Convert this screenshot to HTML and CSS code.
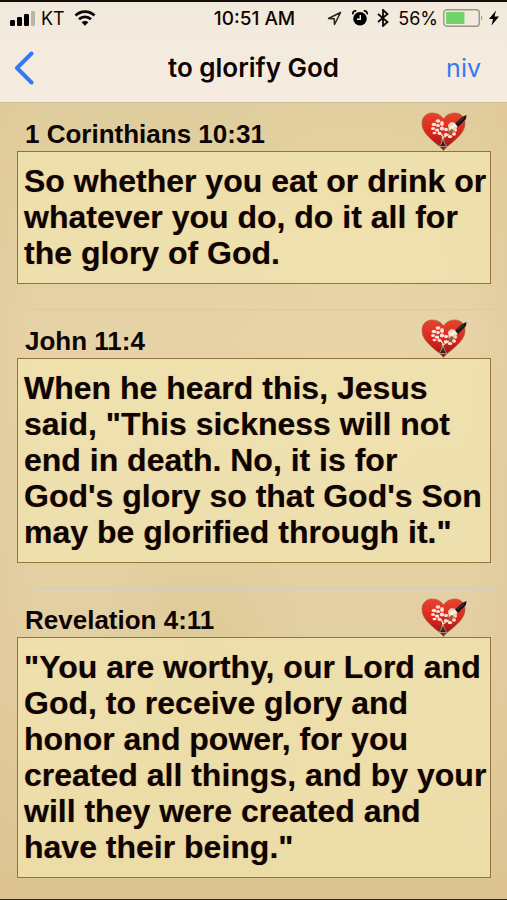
FILE: index.html
```html
<!DOCTYPE html>
<html lang="en">
<head>
<meta charset="utf-8">
<meta name="viewport" content="width=device-width, initial-scale=1">
<title>to glorify God</title>
<link rel="stylesheet" href="styles.css">
</head>
<body>
<svg class="defs" aria-hidden="true">
  <defs>
    <linearGradient id="red" x1="0" y1="0" x2="0" y2="1">
      <stop offset="0" stop-color="#ea4230"/>
      <stop offset=".55" stop-color="#d8241c"/>
      <stop offset="1" stop-color="#8e1712"/>
    </linearGradient>
    <symbol id="heart" viewBox="0 0 46 39">
      <path d="M22.500 38.500C18 32 1 24 1 11.500C1 5 5.500 1 11 1c5 0 9 2 11.500 6C25 3 29 1 34 1c5.500 0 10 4 10 10.500C44 24 27 32 22.500 38.500Z" fill="url(#red)" stroke="#a5603c" stroke-width=".7"/>
      <path d="M21.500 30l.2-6-5-5M22 26l6-4" fill="none" stroke="#e9dcc8" stroke-width="1.400"/>
      <path d="M22 26l-1.500 5-2.500 3.500h8L23.500 31Z" fill="#2c2522" stroke="#b9aa99" stroke-width=".8"/>
      <g fill="#fbe3d5">
        <ellipse cx="13" cy="12.500" rx="2.400" ry="1.700"/><ellipse cx="17" cy="9" rx="2.400" ry="1.700"/>
        <ellipse cx="21" cy="11.500" rx="1.900" ry="2.500"/><ellipse cx="17" cy="13.500" rx="2" ry="1.500"/>
        <ellipse cx="12" cy="16.500" rx="2" ry="1.600"/><ellipse cx="16" cy="18" rx="2.200" ry="1.600"/>
        <ellipse cx="21" cy="16.500" rx="2.200" ry="1.900"/><ellipse cx="13.500" cy="21" rx="2" ry="1.300"/>
        <ellipse cx="18.500" cy="21.500" rx="2" ry="1.400"/><ellipse cx="25" cy="22.500" rx="2.300" ry="1.600"/>
        <ellipse cx="29" cy="24.500" rx="2.300" ry="1.500"/><ellipse cx="33" cy="22" rx="2" ry="1.800"/>
        <ellipse cx="25" cy="17.500" rx="2" ry="1.800"/><ellipse cx="34.500" cy="18" rx="1.500" ry="1.800"/>
      </g>
      <path d="M27 13l3-3 5 1 2 3-3 5-6 2Z" fill="#ead8bd"/>
      <path d="M26 22l4-5 3 1-3 4Z" fill="#8b6937"/>
      <path d="M29 16.500l6-4" stroke="#fff4df" stroke-width="2.500"/>
      <path d="M34 11.500L42 4.500l3.500-1.500-.5 4-8 8Z" fill="#17171a"/>
      <path d="M36 11.500l7-6" stroke="#5a5a5d" stroke-width=".7"/>
    </symbol>
  </defs>
</svg>

<header class="top">
  <div class="status">
    <div class="carrier">
      <svg width="26" height="16" viewBox="0 0 26 16" aria-hidden="true">
        <rect x="0" y="10" width="5" height="6" rx="1.200"/>
        <rect x="7" y="7" width="5" height="9" rx="1.200"/>
        <rect x="14" y="4" width="5" height="12" rx="1.200"/>
        <rect x="21" y="1" width="4" height="15" rx="1.200" fill="#b9b3a8"/>
      </svg>
      <span>KT</span>
      <svg class="wifi" width="22" height="16" viewBox="0 0 22 16" aria-hidden="true">
        <path d="M1.500 5.500a13.500 13.500 0 0 1 19 0M5 9.300a8.500 8.500 0 0 1 12 0" fill="none" stroke="#0b0a09" stroke-width="2.800"/>
        <path d="M11 15.800l-3.400-3.500a4.800 4.800 0 0 1 6.800 0Z"/>
      </svg>
    </div>
    <time class="clock">10:51 AM</time>
    <div class="indicators">
      <svg width="15" height="15" viewBox="0 0 15 15" aria-hidden="true">
        <path d="M13.500 1.500L1.500 7.500l5.700.3.300 5.700Z" fill="none" stroke="#24211e" stroke-width="1.500" stroke-linejoin="round"/>
      </svg>
      <svg class="alarm" width="16" height="16" viewBox="0 0 16 16" aria-hidden="true">
        <circle cx="8" cy="8.800" r="6.800"/>
        <path d="M.8 4.300A3 3 0 0 1 4.300.9M15.200 4.300A3 3 0 0 0 11.700.9" fill="none" stroke="#0b0a09" stroke-width="1.800"/>
        <path d="M8.300 5v4.300H5" fill="none" stroke="#f4ecdf" stroke-width="1.400"/>
      </svg>
      <svg class="bluetooth" width="12" height="18" viewBox="0 0 12 18" aria-hidden="true">
        <path d="M1 5l9.500 8L6 17V1l4.500 4L1 13" fill="none" stroke="#0b0a09" stroke-width="1.800"/>
      </svg>
      <span>56%</span>
      <svg class="battery" width="41" height="18" viewBox="0 0 41 18" aria-hidden="true">
        <rect x=".8" y=".8" width="35.500" height="16.400" rx="3" fill="none" stroke="#9d958b" stroke-width="1.400"/>
        <rect x="3" y="3" width="18.500" height="12" rx="1" fill="#70d36c"/>
        <path d="M38 6.500q2.500 2.500 0 5Z" fill="#9d958b"/>
      </svg>
      <svg width="10" height="16" viewBox="0 0 10 16" aria-hidden="true">
        <path d="M7 .5L0 9h4L2.500 15.500 10 6.500H5.500Z"/>
      </svg>
    </div>
  </div>
  <nav class="bar">
    <button class="back" type="button" aria-label="Back">
      <svg width="20" height="34" viewBox="0 0 20 34" aria-hidden="true">
        <path d="M17.500 2.500L3 17l14.500 14.500" fill="none" stroke="#3478f6" stroke-width="4" stroke-linecap="round" stroke-linejoin="round"/>
      </svg>
    </button>
    <h1>to glorify God</h1>
    <button class="version" type="button">niv</button>
  </nav>
</header>

<main>
  <article class="verse">
    <div class="ref">
      <h2>1 Corinthians 10:31</h2>
      <button class="fav" type="button" aria-label="Memorize 1 Corinthians 10:31"><svg width="46" height="39"><use href="#heart"/></svg></button>
    </div>
    <p>So whether you eat or drink or whatever you do, do it all for the glory of God.</p>
  </article>
  <article class="verse">
    <div class="ref">
      <h2>John 11:4</h2>
      <button class="fav" type="button" aria-label="Memorize John 11:4"><svg width="46" height="39"><use href="#heart"/></svg></button>
    </div>
    <p>When he heard this, Jesus said, "This sickness will not end in death. No, it is for God's glory so that God's Son may be glorified through it."</p>
  </article>
  <article class="verse">
    <div class="ref">
      <h2>Revelation 4:11</h2>
      <button class="fav" type="button" aria-label="Memorize Revelation 4:11"><svg width="46" height="39"><use href="#heart"/></svg></button>
    </div>
    <p>"You are worthy, our Lord and God, to receive glory and honor and power, for you created all things, and by your will they were created and have their being."</p>
  </article>
</main>
</body>
</html>
```
FILE: styles.css
```css
* {
  box-sizing: border-box;
}

body {
  margin: 0;
  min-height: 100vh;
  display: flex;
  flex-direction: column;
  border-top: 2px solid #120c0a;
  border-bottom: 1px solid #35271b;
  background: #e2cfa2;
  color: #0d0503;
  font-family: "Liberation Sans", Arial, sans-serif;
}

h1,
h2,
p {
  margin: 0;
}

button {
  padding: 0;
  border: 0;
  background: none;
  font: inherit;
  cursor: pointer;
}

svg {
  display: block;
  flex: none;
}

.defs {
  position: absolute;
  width: 0;
  height: 0;
}

.top {
  background: linear-gradient(#f1eadc, #f6ecdf);
  border-bottom: 1px solid #cdbf9f;
  font-family: Inter, Roboto, sans-serif;
}

.status,
.bar {
  display: grid;
  grid-template-columns: 1fr auto 1fr;
  align-items: center;
}

.status {
  height: 32px;
  padding: 0 8px 0 10px;
  font-size: 18px;
}

.carrier,
.indicators {
  display: flex;
  align-items: center;
}

.carrier {
  gap: 5px;
}

.wifi {
  margin-left: 4px;
}

.clock {
  font-size: 19px;
  font-weight: 500;
}

.indicators {
  justify-content: flex-end;
  gap: 5px;
}

.alarm {
  margin-left: 5px;
}

.bluetooth {
  margin: 0 4px;
}

.bar {
  height: 68px;
  padding: 0 14px;
}

.bar h1 {
  font-size: 26px;
  font-weight: 600;
  line-height: 32px;
}

.back {
  justify-self: start;
}

.version {
  justify-self: end;
  padding: 0 12px;
  color: #3478f6;
  font-size: 25px;
  line-height: 32px;
}

main {
  flex: 1;
  background:
    radial-gradient(ellipse at 40% 72%, rgba(205, 180, 105, 0.2), transparent 25%),
    radial-gradient(ellipse at 70% 20%, rgba(240, 215, 165, 0.3), transparent 30%),
    linear-gradient(90deg, rgba(226, 196, 150, 0.35), transparent 8%, transparent 92%, rgba(226, 196, 150, 0.35)),
    linear-gradient(#e0cd9d, #e5d3a7 30%, #e2cfa2 70%, #dcc390);
}

.verse {
  padding: 0 16px 25px 17px;
}

.verse + .verse::before {
  content: "";
  display: block;
  height: 1px;
  margin: 0 -6px 0 16px;
  background: #d0cac6;
}

.verse:last-child {
  padding-bottom: 16px;
}

.ref {
  display: flex;
  justify-content: space-between;
  align-items: flex-end;
  height: 48px;
  padding: 0 24px 0 8px;
}

.ref h2 {
  font-size: 26px;
  line-height: 34px;
}

.verse p {
  padding: 11px 0 12px 6px;
  border: 1px solid #94733f;
  background: rgba(243, 231, 178, 0.68);
  font-size: 32px;
  font-weight: 700;
  line-height: 36px;
  text-shadow: 0 0 1px rgba(140, 30, 10, 0.5);
}
```
